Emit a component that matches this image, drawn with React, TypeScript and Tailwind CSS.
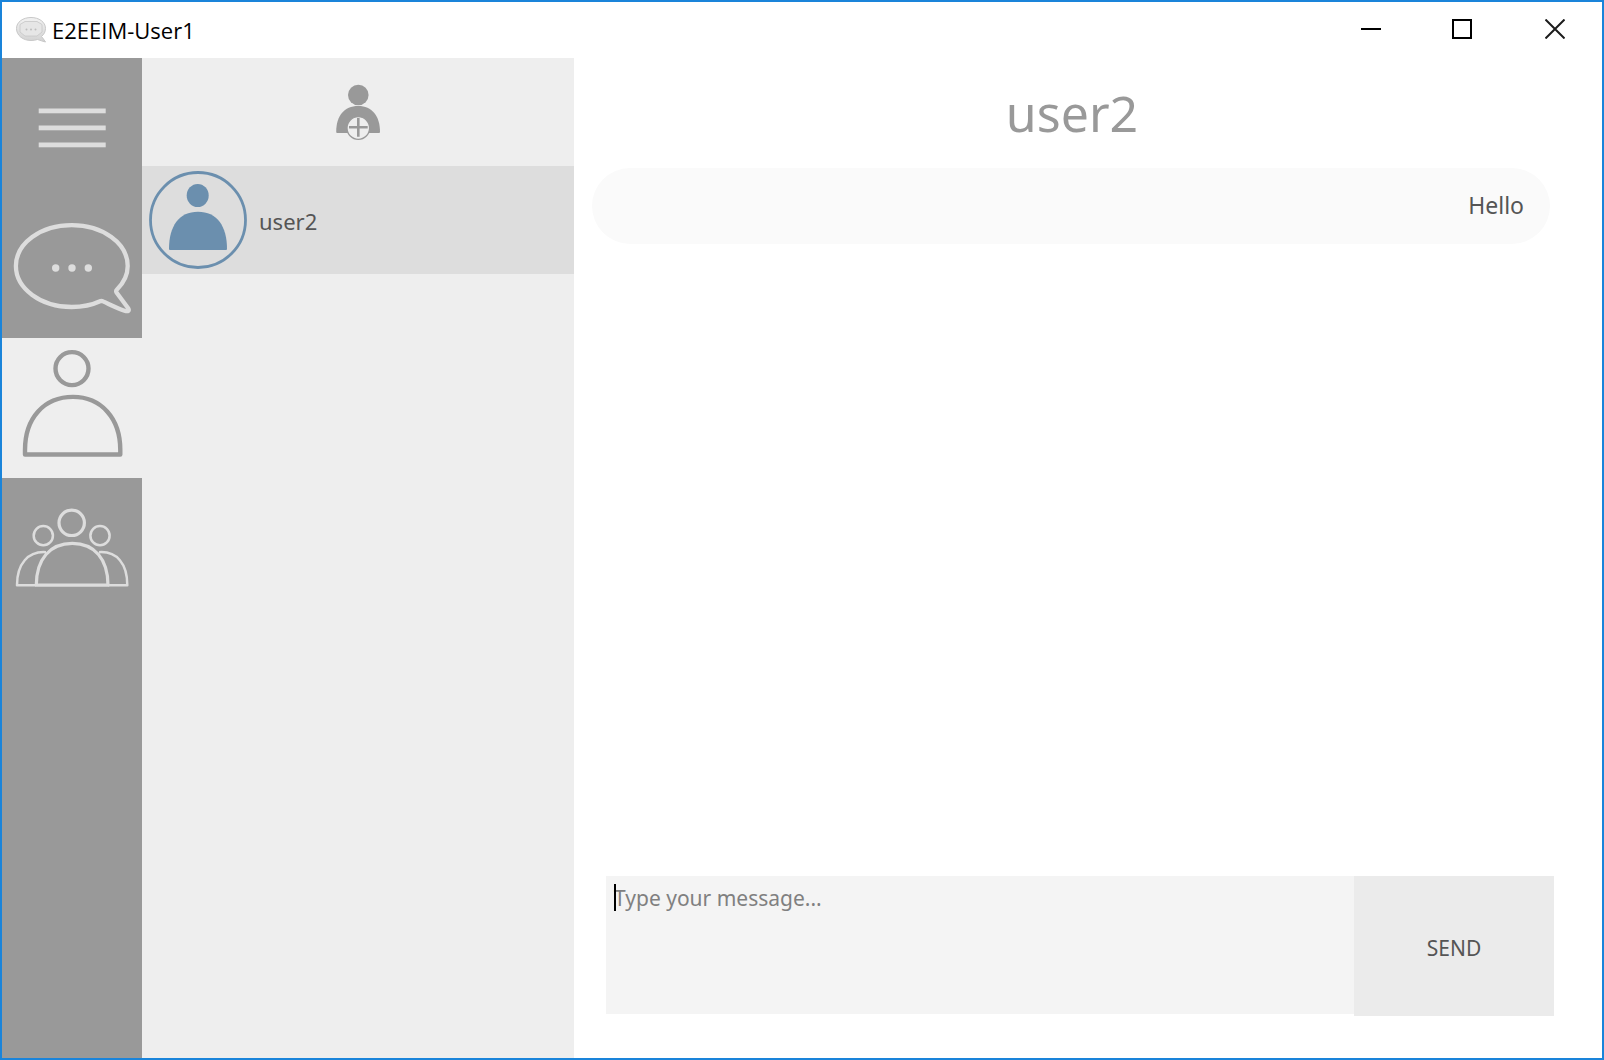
import React from "react";

function BubbleLogo() {
  return (
    <svg className="h-7 w-8 shrink-0" viewBox="0 0 32 28" fill="none" aria-hidden="true">
      <defs>
        <linearGradient id="logo-fill" x1="0" y1="0" x2="0" y2="1">
          <stop offset="0" stopColor="#f2f2f2" />
          <stop offset="1" stopColor="#d2d2d2" />
        </linearGradient>
      </defs>
      <path
        d="M26.5 20.500 C29 18.500 30.500 15.500 30.500 12.500 C30.500 6 24 1.500 16 1.500 C8 1.500 1.500 6 1.500 12.500 C1.500 19.500 8 24.500 16 24.500 C18.500 24.500 20.500 24.100 22.500 23.500 C25 24 27.500 25.500 30.500 26 C29.500 24 27.500 22 26.500 20.500 Z"
        fill="url(#logo-fill)"
        stroke="#c8c8c8"
        strokeWidth="1"
      />
      <path
        d="M10 5.500 H22 L27 8.500 V16 L22 20 H10 L5 16 V8.500 Z"
        fill="#e6e6e6"
        stroke="#c6c6c6"
        strokeWidth="0.8"
      />
      <g fill="#bdbdbd">
        <circle cx="11.500" cy="13.500" r="1" />
        <circle cx="16" cy="13.500" r="1" />
        <circle cx="20.500" cy="13.500" r="1" />
      </g>
    </svg>
  );
}

function MenuIcon() {
  return (
    <svg className="size-full" viewBox="0 0 140 140" fill="#dddddd" aria-hidden="true">
      <rect x="36.700" y="50.500" width="67" height="4.800" />
      <rect x="36.700" y="67.500" width="67" height="4.800" />
      <rect x="36.700" y="84.500" width="67" height="4.800" />
    </svg>
  );
}

function ChatIcon() {
  return (
    <svg className="size-full" viewBox="0 0 140 140" fill="none" aria-hidden="true">
      <path
        d="M98.700 103 C90 107 80 109 69.700 109 C38.800 109 13.900 90.500 13.900 68 C13.900 45.300 38.800 27.200 69.700 27.200 C100.700 27.200 125.700 45.300 125.700 68 C125.700 77 121.500 85 115 91.500 Q113.500 93 114.700 94.800 L126 110 C128 113 126 113.800 122.500 112.700 C116 110.500 110 107.500 101 103.400 Q99.700 102.700 98.700 103 Z"
        stroke="#dddddd"
        strokeWidth="4.300"
        strokeLinejoin="round"
      />
      <g fill="#dddddd">
        <circle cx="53.700" cy="70" r="3.700" />
        <circle cx="70" cy="70" r="3.700" />
        <circle cx="86.300" cy="70" r="3.700" />
      </g>
    </svg>
  );
}

function PersonIcon() {
  return (
    <svg
      className="size-full"
      viewBox="0 0 140 140"
      fill="none"
      stroke="#999999"
      strokeWidth="4.400"
      strokeLinejoin="round"
      aria-hidden="true"
    >
      <circle cx="70" cy="30.600" r="16.500" />
      <path d="M23 116.500 V112 C23 80 42 58.900 71 58.900 C99 58.900 118.300 80 118.300 112 V116.500 Z" />
    </svg>
  );
}

function GroupIcon() {
  return (
    <svg
      className="size-full"
      viewBox="0 0 140 140"
      fill="none"
      stroke="#dddddd"
      strokeLinejoin="round"
      aria-hidden="true"
    >
      <g strokeWidth="3.200">
        <circle cx="69.700" cy="44.800" r="12.700" />
        <path d="M34.300 107.200 C34.300 81 48 65.300 70.300 65.300 C92.500 65.300 106 81 106 107.200 Z" />
      </g>
      <g strokeWidth="2.500">
        <circle cx="41.300" cy="57.700" r="9.600" />
        <circle cx="98" cy="57.700" r="9.600" />
        <path d="M44 74.200 C26 73 15 86 15 107.200 H34" />
        <path d="M97 74.200 C115 73 125.300 86 125.300 107.200 H106" />
      </g>
    </svg>
  );
}

function AddContactIcon() {
  return (
    <svg className="h-16 w-12" viewBox="0 0 48 64" aria-hidden="true">
      <circle cx="24.300" cy="15" r="10.300" fill="#999999" />
      <path
        d="M2.200 51.900 C2.200 36 10 26 24.300 26 C38 26 46 36 46 51.900 Q46 52.900 45 52.900 H3.200 Q2.200 52.900 2.200 51.900 Z"
        fill="#999999"
      />
      <circle cx="24.300" cy="48" r="11.300" fill="#eeeeee" stroke="#999999" strokeWidth="1.300" />
      <path d="M15 47.300 H33.700 M24.300 38 V56.700" stroke="#999999" strokeWidth="2.600" />
    </svg>
  );
}

function Avatar() {
  return (
    <svg className="size-[98px] shrink-0" viewBox="0 0 98 98" fill="#6b8fae" aria-hidden="true">
      <circle cx="49" cy="49" r="47.500" fill="none" stroke="#6b8fae" strokeWidth="2.800" />
      <ellipse cx="48.700" cy="24.500" rx="11" ry="11.500" />
      <path d="M20 78 C20 55 30 40.700 49 40.700 C68 40.700 78 55 78 78 Q78 79 77 79 H21 Q20 79 20 78 Z" />
    </svg>
  );
}

export default function App() {
  return (
    <div className="flex h-screen flex-col border-2 border-[#1a84da] bg-white font-['Noto_Sans',sans-serif] text-[#555555]">
      <header className="flex h-14 shrink-0 items-center justify-between pl-[13px] text-black">
        <div className="flex items-center gap-[5px]">
          <BubbleLogo />
          <span className="font-['Open_Sans',sans-serif] text-[22px] leading-8">E2EEIM-User1</span>
        </div>
        <div className="flex h-full">
          <button aria-label="Minimize" className="flex w-[90px] items-center justify-center pb-0.5">
            <svg className="size-5" viewBox="0 0 20 20" stroke="currentColor" strokeWidth="2">
              <path d="M0 10 H20" />
            </svg>
          </button>
          <button aria-label="Maximize" className="flex w-[92px] items-center justify-center pb-0.5">
            <svg className="size-5" viewBox="0 0 20 20" fill="none" stroke="currentColor" strokeWidth="2">
              <rect x="1" y="1" width="18" height="18" />
            </svg>
          </button>
          <button aria-label="Close" className="flex w-[94px] items-center justify-center pb-0.5">
            <svg className="size-5" viewBox="0 0 20 20" stroke="#1c1c1c" strokeWidth="2">
              <path d="M0.500 0.500 L19.500 19.500 M19.500 0.500 L0.500 19.500" />
            </svg>
          </button>
        </div>
      </header>

      <div className="flex min-h-0 flex-1">
        <nav className="flex w-[140px] shrink-0 flex-col bg-[#999999]">
          <button aria-label="Menu" className="h-[140px]">
            <MenuIcon />
          </button>
          <button aria-label="Chats" className="h-[140px]">
            <ChatIcon />
          </button>
          <button aria-label="Contacts" aria-current="page" className="h-[140px] bg-[#eeeeee]">
            <PersonIcon />
          </button>
          <button aria-label="Groups" className="h-[140px]">
            <GroupIcon />
          </button>
        </nav>

        <aside className="flex w-[432px] shrink-0 flex-col bg-[#eeeeee]">
          <button aria-label="Add contact" className="flex h-[108px] items-center justify-center">
            <AddContactIcon />
          </button>
          <button className="flex h-[108px] items-center gap-3 bg-[#dddddd] pl-[7px] text-left">
            <Avatar />
            <span className="pt-0.5 text-[22px] leading-8">user2</span>
          </button>
        </aside>

        <main className="flex min-w-0 flex-1 flex-col">
          <h1 className="flex h-[110px] shrink-0 items-center justify-center pr-8 text-[50px] leading-none text-[#999999]">
            user2
          </h1>
          <div className="flex-1 pr-[52px] pl-[18px]">
            <p className="flex h-[76px] items-center justify-end rounded-[38px] bg-[#fafafa] pr-[26px] pb-0.5 text-[23px] leading-8">
              Hello
            </p>
          </div>
          <form className="mr-12 mb-[42px] ml-8 flex h-[140px] shrink-0" onSubmit={(e) => e.preventDefault()}>
            <div className="relative mb-0.5 flex-1 bg-[#f4f4f4]">
              <textarea
                aria-label="Message"
                placeholder="Type your message..."
                className="block size-full resize-none px-2 py-1.5 text-[21px] leading-8 placeholder-[#808080] outline-none"
              />
              <span className="absolute top-2 left-2 h-[27px] w-0.5 bg-black" />
            </div>
            <button type="submit" className="w-[200px] bg-[#ebebeb] pt-1 text-[21px] leading-8">
              SEND
            </button>
          </form>
        </main>
      </div>
    </div>
  );
}
